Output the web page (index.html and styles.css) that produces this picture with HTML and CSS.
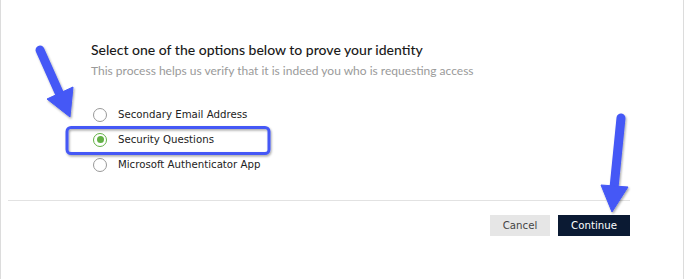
FILE: index.html
```html
<!DOCTYPE html>
<html lang="en">
<head>
  <meta charset="UTF-8" />
  <title>Verify Identity</title>
  <link rel="stylesheet" href="styles.css">
</head>
<body>
  <div class="panel">
    <div class="content">
      <h2 class="title">Select one of the options below to prove your identity</h2>
      <p class="subtitle">This process helps us verify that it is indeed you who is requesting access</p>

      <div class="options">
        <label class="option">
          <span class="radio"></span>
          <span class="option-label">Secondary Email Address</span>
        </label>
        <label class="option">
          <span class="radio checked"></span>
          <span class="option-label">Security Questions</span>
        </label>
        <label class="option">
          <span class="radio"></span>
          <span class="option-label">Microsoft Authenticator App</span>
        </label>
      </div>
    </div>

    <div class="footer">
      <div class="divider"></div>
      <div class="actions">
        <button class="btn btn-cancel">Cancel</button>
        <button class="btn btn-continue">Continue</button>
      </div>
    </div>

    <!-- annotation overlay -->
    <svg class="marks" width="685" height="279" viewBox="0 0 685 279">
      <defs>
        <filter id="shadow" x="-20%" y="-20%" width="140%" height="140%">
          <feDropShadow dx="1" dy="1.5" stdDeviation="1.2" flood-color="#000" flood-opacity="0.35"/>
        </filter>
      </defs>
      <g fill="#4458f6" stroke="#4458f6" filter="url(#shadow)">
        <line x1="40" y1="50" x2="61" y2="97" stroke-width="9" stroke-linecap="round"/>
        <polygon points="47,99 73,87 70,117" stroke-width="1" stroke-linejoin="round"/>
        <line x1="621" y1="118" x2="614" y2="188" stroke-width="9" stroke-linecap="round"/>
        <polygon points="601,185 628,187 612,212" stroke-width="1" stroke-linejoin="round"/>
      </g>
      <rect x="67" y="127.5" width="202" height="26" rx="4" fill="none" stroke="#4458f6" stroke-width="3" filter="url(#shadow)"/>
    </svg>
  </div>
</body>
</html>
```

FILE: styles.css
```css
* {
  box-sizing: border-box;
}

html, body {
  margin: 0;
  padding: 0;
  background: white;
  width: 100%;
  height: 100%;
  overflow: hidden;
}

.panel {
  position: relative;
  width: 684px;
  height: 279px;
  border-left: 1px solid #dcdcdc;
  border-right: 1px solid #dcdcdc;
  display: flex;
  flex-direction: column;
}

.content {
  padding: 41px 0 0 90px;
}

.title {
  margin: 0;
  font-family: Lato, sans-serif;
  font-size: 14px;
  font-weight: 500;
  line-height: 18px;
  color: #1a1a1a;
}

.subtitle {
  margin: 5px 0 0;
  font-family: Lato, sans-serif;
  font-size: 12px;
  line-height: 14px;
  color: #9a9a9a;
}

.options {
  margin-top: 24px;
  display: flex;
  flex-direction: column;
}

.option {
  height: 25px;
  flex: 0 0 25px;
  display: flex;
  align-items: center;
  gap: 11px;
  padding-left: 2px;
  font-family: "DejaVu Sans", Tahoma, sans-serif;
  font-size: 10.2px;
  color: #222;
}

.radio {
  width: 14px;
  height: 14px;
  flex: 0 0 14px;
  border-radius: 50%;
  border: 1.5px solid #999;
  background: white;
  display: flex;
  justify-content: center;
  align-items: center;
}

.radio.checked {
  border-color: #62b045;
}

.radio.checked::after {
  content: "";
  width: 7px;
  height: 7px;
  border-radius: 50%;
  background: #62b045;
}

.footer {
  margin-top: 23px;
  padding-left: 7px;
}

.divider {
  width: 622px;
  height: 1px;
  background: #e2e2e2;
}

.actions {
  width: 622px;
  margin-top: 14px;
  display: flex;
  justify-content: flex-end;
  gap: 8px;
}

.btn {
  height: 21px;
  border: none;
  border-radius: 0;
  font-family: "DejaVu Sans", Tahoma, sans-serif;
  font-size: 10.2px;
  padding: 0;
}

.btn-cancel {
  width: 60px;
  background: #e6e6e6;
  color: #444;
}

.btn-continue {
  width: 72px;
  background: #0b1a33;
  color: white;
}

.marks {
  position: absolute;
  left: -1px;
  top: 0;
  pointer-events: none;
}
```
